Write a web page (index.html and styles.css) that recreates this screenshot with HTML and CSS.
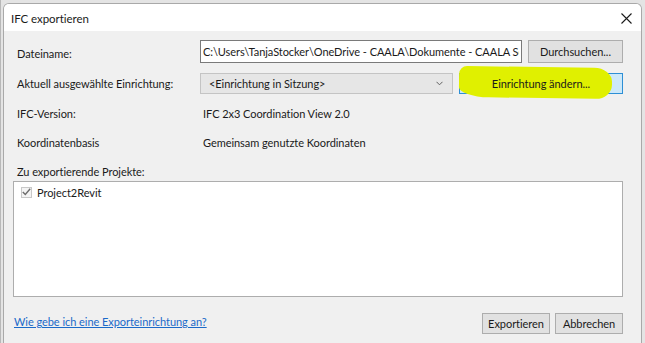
FILE: index.html
```html
<!DOCTYPE html>
<html lang="de">
<head>
<meta charset="utf-8">
<title>IFC exportieren</title>
<link rel="stylesheet" href="styles.css">
</head>
<body>
<div class="desk">
  <div class="dialog">
    <div class="titlebar">
      <span class="title">IFC exportieren</span>
      <span class="close" aria-label="Schließen">
        <svg width="11" height="11" viewBox="0 0 11 11"><path d="M0.5 0.5 L10.5 10.5 M10.5 0.5 L0.5 10.5" stroke="#1a1a1a" stroke-width="1.1" fill="none"/></svg>
      </span>
    </div>
    <div class="content">
      <div class="row row-file">
        <span class="label">Dateiname:</span>
        <div class="textbox"><span class="tb-text">C:\Users\TanjaStocker\OneDrive - CAALA\Dokumente - CAALA Software</span></div>
        <button class="btn btn-browse">Durchsuchen...</button>
      </div>
      <div class="row row-setup">
        <span class="label">Aktuell ausgewählte Einrichtung:</span>
        <div class="combo">
          <span>&lt;Einrichtung in Sitzung&gt;</span>
          <svg class="chev" width="7" height="5" viewBox="0 0 7 5"><path d="M0.5 0.8 L3.5 3.8 L6.5 0.8" stroke="#606060" stroke-width="1" fill="none"/></svg>
        </div>
        <div class="btn-wrap">
          <button class="btn btn-change"><span class="btn-label">Einrichtung ändern...</span></button>
          <span class="highlight"></span>
        </div>
      </div>
      <div class="row row-info">
        <span class="label">IFC-Version:</span>
        <span class="value">IFC 2x3 Coordination View 2.0</span>
      </div>
      <div class="row row-info2">
        <span class="label">Koordinatenbasis</span>
        <span class="value">Gemeinsam genutzte Koordinaten</span>
      </div>
      <div class="row row-projlabel">
        <span class="label">Zu exportierende Projekte:</span>
      </div>
      <div class="listbox">
        <div class="item">
          <span class="check">
            <svg width="9" height="8" viewBox="0 0 9 8"><path d="M0.8 4 L3.3 6.5 L8.2 0.8" stroke="#6d6d6d" stroke-width="1.4" fill="none"/></svg>
          </span>
          <span>Project2Revit</span>
        </div>
      </div>
      <div class="row row-bottom">
        <a class="link" href="#">Wie gebe ich eine Exporteinrichtung an?</a>
        <div class="actions">
          <button class="btn btn-act">Exportieren</button>
          <button class="btn btn-act">Abbrechen</button>
        </div>
      </div>
    </div>
  </div>
</div>
</body>
</html>
```
FILE: styles.css
```css
html, body {
  margin: 0;
  padding: 0;
}
body {
  width: 645px;
  height: 343px;
  overflow: hidden;
  background: #e4e4e4;
  font-family: Lato, "Liberation Sans", sans-serif;
  font-size: 11px;
  letter-spacing: -0.05px;
  color: #1a1a1a;
}
.desk {
  padding: 3px 3px 0 3px;
  border-left: 1px solid #b8b8b8;
  box-sizing: border-box;
  height: 343px;
}
.dialog {
  width: 639px;
  height: 340px;
  border: 1px solid #a9a9a9;
  border-bottom: none;
  border-radius: 6px 6px 0 0;
  box-sizing: border-box;
  background: #f0f0f0;
  overflow: hidden;
  margin-left: -1px;
}
.titlebar {
  height: 27px;
  background: #ffffff;
  display: flex;
  align-items: center;
  justify-content: space-between;
  padding: 0 9px 0 7px;
}
.title {
  font-size: 11.5px;
  color: #1a1a1a;
  padding-top: 2px;
}
.close {
  display: flex;
  align-items: center;
  padding-top: 1px;
}
.content {
  padding: 9px 18px 0 9px;
}
.row {
  display: flex;
  align-items: center;
}
.label {
  width: 187px;
  flex: none;
  padding-left: 4px;
  box-sizing: border-box;
}
.row-file {
  height: 23px;
}
.row-file .label {
  padding-top: 4px;
}
.textbox {
  width: 322px;
  height: 23px;
  box-sizing: border-box;
  border: 1px solid #7a7a7a;
  background: #fff;
  padding: 0 2px;
  line-height: 21px;
  white-space: nowrap;
  overflow: hidden;
}
.tb-text {
  display: block;
  width: 316px;
  overflow: hidden;
  text-overflow: clip;
}
.btn {
  font-family: inherit;
  font-size: 11px;
  letter-spacing: -0.05px;
  color: #1a1a1a;
  background: #e1e1e1;
  border: 1px solid #adadad;
  padding: 0;
  box-sizing: border-box;
}
.btn-browse {
  width: 95px;
  height: 23px;
  margin-left: 6px;
}
.row-setup {
  margin-top: 10px;
  height: 21px;
}
.combo {
  width: 253px;
  height: 21px;
  box-sizing: border-box;
  border: 1px solid #c4c4c4;
  background: #e6e6e6;
  display: flex;
  align-items: center;
  justify-content: space-between;
  padding: 0 9px 0 8px;
}
.btn-wrap {
  position: relative;
  margin-left: 6px;
}
.btn-change {
  display: block;
  width: 164px;
  height: 21px;
  background: #cce8f9;
  border-color: #2d8fd5;
}
.btn-label {
  position: relative;
  z-index: 2;
}
.highlight {
  position: absolute;
  z-index: 1;
  left: 0;
  top: -6px;
  width: 153px;
  height: 31px;
  background: #e0f000;
  border-radius: 8px 18px 16px 30px / 8px 14px 14px 10px;
  transform: rotate(0.8deg);
  pointer-events: none;
}
.row-info {
  margin-top: 9px;
  height: 20px;
}
.row-info2 {
  margin-top: 9px;
  height: 20px;
}
.value {
  padding-left: 3px;
}
.row-projlabel {
  margin-top: 9px;
  height: 20px;
}
.listbox {
  height: 116px;
  border: 1px solid #adadad;
  background: #fff;
  box-sizing: border-box;
  padding: 3px 7px;
}
.item {
  display: flex;
  align-items: center;
  gap: 5px;
  height: 14px;
}
.check {
  width: 11px;
  height: 11px;
  box-sizing: border-box;
  border: 1px solid #c8c8c8;
  background: #f4f4f4;
  display: flex;
  align-items: center;
  justify-content: center;
}
.row-bottom {
  margin-top: 16px;
  height: 21px;
  justify-content: space-between;
  align-items: center;
}
.link {
  color: #1b6ac9;
  text-decoration: underline;
  padding-left: 1px;
  line-height: 14px;
  margin-bottom: 3px;
}
.actions {
  display: flex;
  gap: 5px;
}
.btn-act {
  width: 68px;
  height: 21px;
}
```
